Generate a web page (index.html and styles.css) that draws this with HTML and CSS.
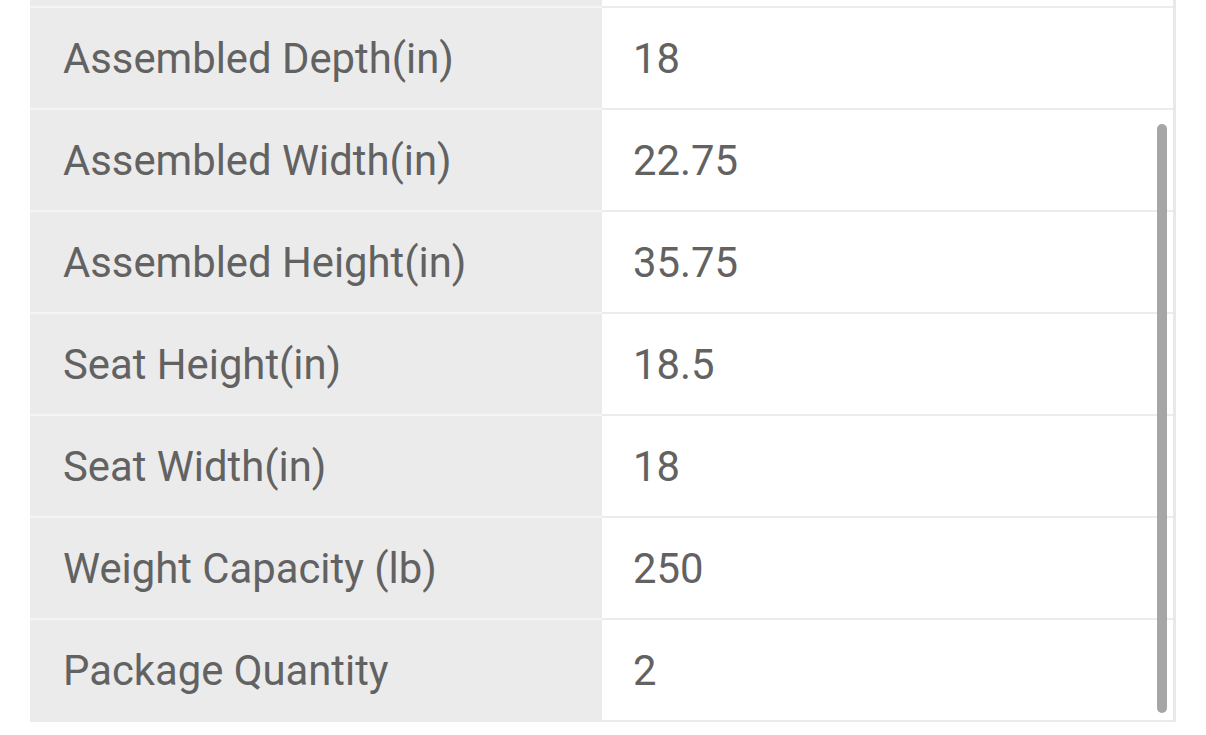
FILE: index.html
```html
<!DOCTYPE html>
<html>
<head>
<meta charset="utf-8">
<link rel="stylesheet" href="styles.css">
</head>
<body>
<div class="wrap">
  <div class="spec">
    <div class="row top"><div class="k"></div><div class="v"></div></div>
    <div class="row"><div class="k">Assembled Depth(in)</div><div class="v">18</div></div>
    <div class="row"><div class="k">Assembled Width(in)</div><div class="v">22.75</div></div>
    <div class="row"><div class="k">Assembled Height(in)</div><div class="v">35.75</div></div>
    <div class="row"><div class="k">Seat Height(in)</div><div class="v">18.5</div></div>
    <div class="row"><div class="k">Seat Width(in)</div><div class="v">18</div></div>
    <div class="row"><div class="k">Weight Capacity (lb)</div><div class="v">250</div></div>
    <div class="row"><div class="k">Package Quantity</div><div class="v">2</div></div>
  </div>
  <div class="scrollbar"></div>
</div>
</body>
</html>
```
FILE: styles.css
```css
html, body {
  margin: 0;
  padding: 0;
  background: #ffffff;
  overflow: hidden;
}
body {
  width: 1206px;
  height: 735px;
  font-family: Roboto, "Noto Sans", sans-serif;
}
.wrap {
  position: relative;
  margin-left: 30px;
  width: 1146px;
}
.spec {
  display: flex;
  flex-direction: column;
  border-right: 3px solid #e9e9e9;
  border-bottom: 2px solid #ebebeb;
}
.row {
  display: grid;
  grid-template-columns: 572px 1fr;
  height: 100px;
  border-top: 2px solid transparent;
}
.row.top {
  height: 6px;
  border-top: 0;
}
.k, .v {
  display: flex;
  align-items: center;
  font-size: 41.8px;
  color: #626262;
  letter-spacing: 0;
}
.k {
  background: #ebebeb;
  padding-left: 33px;
}
.v {
  background: #ffffff;
  padding-left: 31px;
}
.row:not(.top) .k {
  border-top: 2px solid #f4f4f4;
  margin-top: -2px;
}
.row:not(.top) .v {
  border-top: 2px solid #ececec;
  margin-top: -2px;
}
.scrollbar {
  position: absolute;
  left: 1127px;
  top: 124px;
  width: 10px;
  height: 589px;
  border-radius: 5px;
  background: #a6a6a6;
}
```
